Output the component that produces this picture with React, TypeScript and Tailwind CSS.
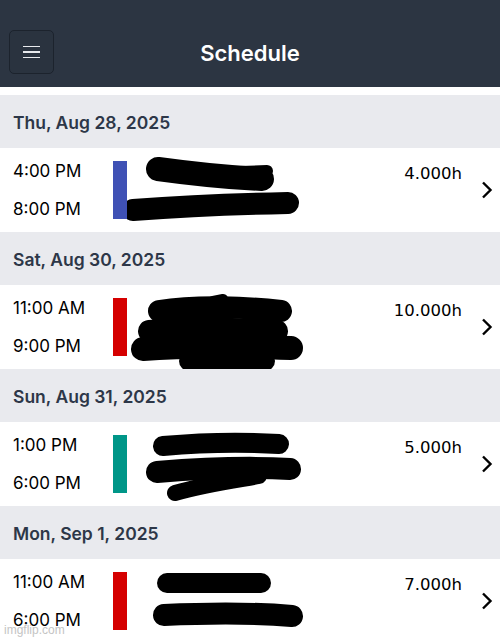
import React from "react";

type Shift = {
  start: string;
  end: string;
  hours: string;
  color: string;
  marks: { d: string; w: number }[];
};

type Day = {
  label: string;
  shift: Shift;
};

// redaction marks, coordinates are local to the note column of each row
const DAYS: Day[] = [
  {
    label: "Thu, Aug 28, 2025",
    shift: {
      start: "4:00 PM",
      end: "8:00 PM",
      hours: "4.000h",
      color: "bg-[#3f51b5]",
      marks: [
        { d: "M31 21 C60 25 90 29 135 31", w: 24 },
        { d: "M82 25 L140 23", w: 12 },
        { d: "M6 62 C60 58 110 56 161 55", w: 22 },
      ],
    },
  },
  {
    label: "Sat, Aug 30, 2025",
    shift: {
      start: "11:00 AM",
      end: "9:00 PM",
      hours: "10.000h",
      color: "bg-[#d50000]",
      marks: [
        { d: "M32 26 C70 20 120 22 154 26", w: 22 },
        { d: "M86 16 L96 14", w: 10 },
        { d: "M22 46 C70 42 120 44 150 46", w: 22 },
        { d: "M16 64 C70 60 120 62 164 63", w: 24 },
        { d: "M62 76 L138 76", w: 20 },
      ],
    },
  },
  {
    label: "Sun, Aug 31, 2025",
    shift: {
      start: "1:00 PM",
      end: "6:00 PM",
      hours: "5.000h",
      color: "bg-[#009688]",
      marks: [
        { d: "M36 24 C80 20 120 20 152 22", w: 20 },
        { d: "M30 50 C80 46 130 45 163 47", w: 22 },
        { d: "M48 71 C80 62 110 58 132 54", w: 16 },
      ],
    },
  },
  {
    label: "Mon, Sep 1, 2025",
    shift: {
      start: "11:00 AM",
      end: "6:00 PM",
      hours: "7.000h",
      color: "bg-[#d50000]",
      marks: [
        { d: "M40 24 L134 24", w: 20 },
        { d: "M37 56 C80 54 130 54 165 57", w: 22 },
      ],
    },
  },
];

function Redaction({ marks }: { marks: Shift["marks"] }) {
  return (
    <svg width="270" height="84" viewBox="0 0 270 84" className="shrink-0">
      {marks.map((m, i) => (
        <path
          key={i}
          d={m.d}
          fill="none"
          stroke="#000"
          strokeWidth={m.w}
          strokeLinecap="round"
        />
      ))}
    </svg>
  );
}

function ShiftRow({ shift }: { shift: Shift }) {
  return (
    <div className="flex h-[84px] items-center bg-white pl-[13px]">
      <div className="flex h-[58px] w-[100px] flex-col justify-between text-[17px] leading-[20px] text-black">
        <span>{shift.start}</span>
        <span>{shift.end}</span>
      </div>
      <div className={`h-[58px] w-[14px] ${shift.color}`} />
      <div className="flex-1 self-stretch overflow-hidden">
        <Redaction marks={shift.marks} />
      </div>
      <div className="mt-[-32px] text-right font-['DejaVu_Sans'] text-[16.5px] text-black">
        {shift.hours}
      </div>
      <svg
        width="24"
        height="24"
        viewBox="0 0 24 24"
        className="ml-[13px] mr-px"
      >
        <path
          d="M8 4.5 L15.5 12 L8 19.5"
          fill="none"
          stroke="#000"
          strokeWidth="2.4"
        />
      </svg>
    </div>
  );
}

export default function App() {
  return (
    <div className="relative h-[643px] w-[500px] overflow-hidden bg-white font-['Inter',sans-serif]">
      <header className="grid h-[87px] grid-cols-[1fr_auto_1fr] items-center bg-[#2c3542] px-[9px] pt-[17px]">
        <button className="flex h-[44px] w-[45px] flex-col items-center justify-center gap-[4px] rounded-[5px] border border-[#1c232d] bg-[#2a333f]">
          <span className="h-[1.5px] w-[17px] bg-[#e8eaed]" />
          <span className="h-[1.5px] w-[17px] bg-[#e8eaed]" />
          <span className="h-[1.5px] w-[17px] bg-[#e8eaed]" />
        </button>
        <h1 className="pt-[2px] text-[22px] font-semibold text-white">Schedule</h1>
        <div />
      </header>

      <div className="h-[8px] bg-white" />

      {DAYS.map((day) => (
        <section key={day.label}>
          <div className="flex h-[53px] items-center bg-[#e9eaee] pl-[13px] pt-[3px] text-[17.5px] font-semibold text-[#2d3748]">
            {day.label}
          </div>
          <ShiftRow shift={day.shift} />
        </section>
      ))}

      <span className="absolute bottom-[4px] left-[4px] font-['Liberation_Sans',sans-serif] text-[12px] text-[#c4c4c4]">
        imgflip.com
      </span>
    </div>
  );
}
